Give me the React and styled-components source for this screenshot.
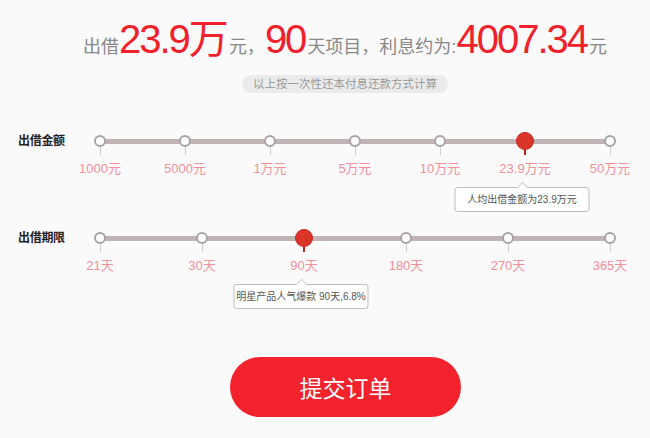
import React from 'react';
import styled, { createGlobalStyle } from 'styled-components';

const GlobalStyle = createGlobalStyle`
  body {
    margin: 0;
    background: #fafafa;
    font-family: "Liberation Sans", "Noto Sans CJK SC", sans-serif;
  }
`;

const Page = styled.div`
  width: 650px;
  height: 438px;
  overflow: hidden;
  padding-top: 17px;
  box-sizing: border-box;
`;

const Headline = styled.div`
  height: 44px;
  line-height: 44px;
  padding-left: 40px;
  text-align: center;
  color: #888;
  font-size: 18px;
  white-space: nowrap;
`;

const Big = styled.span`
  color: #f0212b;
  font-size: 40px;
  letter-spacing: -2px;
  margin-right: 2px;
`;

const NoteWrap = styled.div`
  display: flex;
  justify-content: center;
  padding-left: 40px;
  margin-top: 14px;
`;

const Note = styled.div`
  height: 18px;
  line-height: 18px;
  padding: 0 11px;
  border-radius: 9px;
  background: #ebebeb;
  color: #999;
  font-size: 11.5px;
`;

const SliderRow = styled.div`
  display: flex;
  align-items: flex-start;
  padding-left: 18px;
  margin-top: ${(p) => p.$gap}px;
`;

const RowLabel = styled.div`
  width: 82px;
  font-size: 12px;
  line-height: 12px;
  color: #222;
  font-weight: bold;
  letter-spacing: -0.3px;
`;

const Rail = styled.div`
  position: relative;
  width: 510px;
  display: flex;
  justify-content: space-between;

  &::before {
    content: '';
    position: absolute;
    left: 0;
    right: 0;
    top: 4px;
    height: 5px;
    background: #c2b4b4;
  }
`;

const Stop = styled.div`
  position: relative;
  width: 0;
  display: flex;
  flex-direction: column;
  align-items: center;
`;

const Dot = styled.div`
  position: relative;
  z-index: 2;
  box-sizing: border-box;
  flex: none;
  width: ${(p) => (p.$active ? 18 : 12)}px;
  height: ${(p) => (p.$active ? 18 : 12)}px;
  margin: ${(p) => (p.$active ? '-3px' : '0')};
  border-radius: 50%;
  border: ${(p) => (p.$active ? '1px solid #c4281f' : '2px solid #a9a3a3')};
  background: ${(p) => (p.$active ? '#db3428' : '#fff')};
`;

const Tick = styled.div`
  flex: none;
  width: ${(p) => (p.$active ? 2 : 1)}px;
  height: 8px;
  background: ${(p) => (p.$active ? '#b5241b' : '#d2cccc')};
`;

const StopLabel = styled.div`
  margin-top: 6px;
  font-size: 13px;
  line-height: 16px;
  color: #f0909b;
  white-space: nowrap;
`;

const Tooltip = styled.div`
  position: absolute;
  top: 52px;
  left: 50%;
  transform: translateX(calc(-50% - 3px));
  width: 135px;
  height: 25px;
  box-sizing: border-box;
  border: 1px solid #bdbdbd;
  border-radius: 3px;
  background: #fff;
  color: #555;
  font-size: 10px;
  line-height: 23px;
  text-align: center;
  white-space: nowrap;

  &::before,
  &::after {
    content: '';
    position: absolute;
    left: 50%;
    border: 6px solid transparent;
    border-top: none;
    transform: translateX(-50%);
  }

  &::before {
    top: -6px;
    border-bottom-color: #bdbdbd;
  }

  &::after {
    top: -5px;
    border-bottom-color: #fff;
  }
`;

const SubmitButton = styled.button`
  display: block;
  margin: ${(p) => p.$top}px 0 0 230px;
  width: 231px;
  height: 60px;
  border: none;
  border-radius: 30px;
  background: #f3232e;
  color: #fff;
  font-family: "Noto Sans CJK SC", sans-serif;
  font-size: 23px;
  cursor: pointer;
`;

const amounts = ['1000元', '5000元', '1万元', '5万元', '10万元', '23.9万元', '50万元'];
const terms = ['21天', '30天', '90天', '180天', '270天', '365天'];

const Slider = ({ label, stops, active, tip, gap }) => (
  <SliderRow $gap={gap}>
    <RowLabel>{label}</RowLabel>
    <Rail>
      {stops.map((s, i) => (
        <Stop key={s}>
          <Dot $active={i === active} />
          <Tick $active={i === active} />
          <StopLabel>{s}</StopLabel>
          {i === active && <Tooltip>{tip}</Tooltip>}
        </Stop>
      ))}
    </Rail>
  </SliderRow>
);

const App = () => {
  return (
    <Page>
      <GlobalStyle />
      <Headline>
        出借<Big>23.9万</Big>元，<Big>90</Big>天项目，利息约为:<Big>4007.34</Big>元
      </Headline>
      <NoteWrap>
        <Note>以上按一次性还本付息还款方式计算</Note>
      </NoteWrap>
      <Slider label="出借金额" stops={amounts} active={5} tip="人均出借金额为23.9万元" gap={42} />
      <Slider label="出借期限" stops={terms} active={2} tip="明星产品人气爆款 90天,6.8%" gap={55} />
      <SubmitButton $top={83}>提交订单</SubmitButton>
    </Page>
  );
};

export default App;
